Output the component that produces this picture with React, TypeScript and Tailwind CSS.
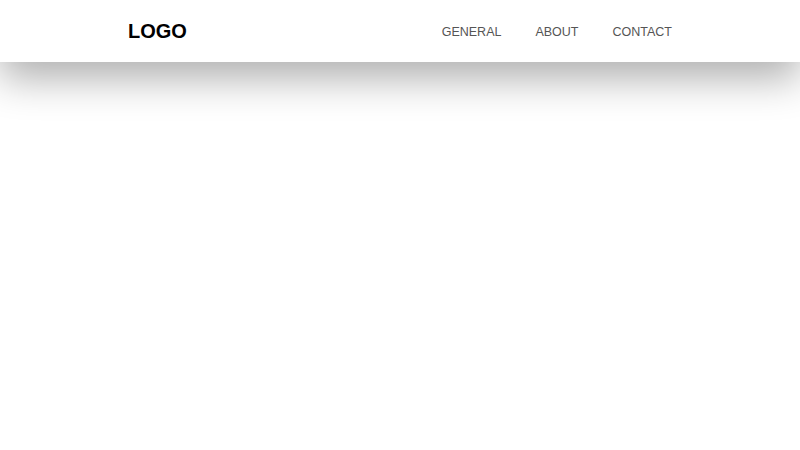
export default function App() {
  const links = ['GENERAL', 'ABOUT', 'CONTACT'];

  return (
    <div className="min-h-screen bg-white font-['Liberation_Sans',Arial,sans-serif]">
      <header className="relative z-10 h-[62px] bg-white shadow-[0_16px_40px_rgba(0,0,0,0.32)]">
        <div className="flex h-full items-center justify-between px-[128px]">
          <div className="text-[20px] font-bold text-black">LOGO</div>
          <nav className="flex items-center gap-[34px] pt-[2px]">
            {links.map(l => (
              <a key={l} href="#" className="text-[12.5px] text-[#555]">
                {l}
              </a>
            ))}
          </nav>
        </div>
      </header>
    </div>
  );
}
